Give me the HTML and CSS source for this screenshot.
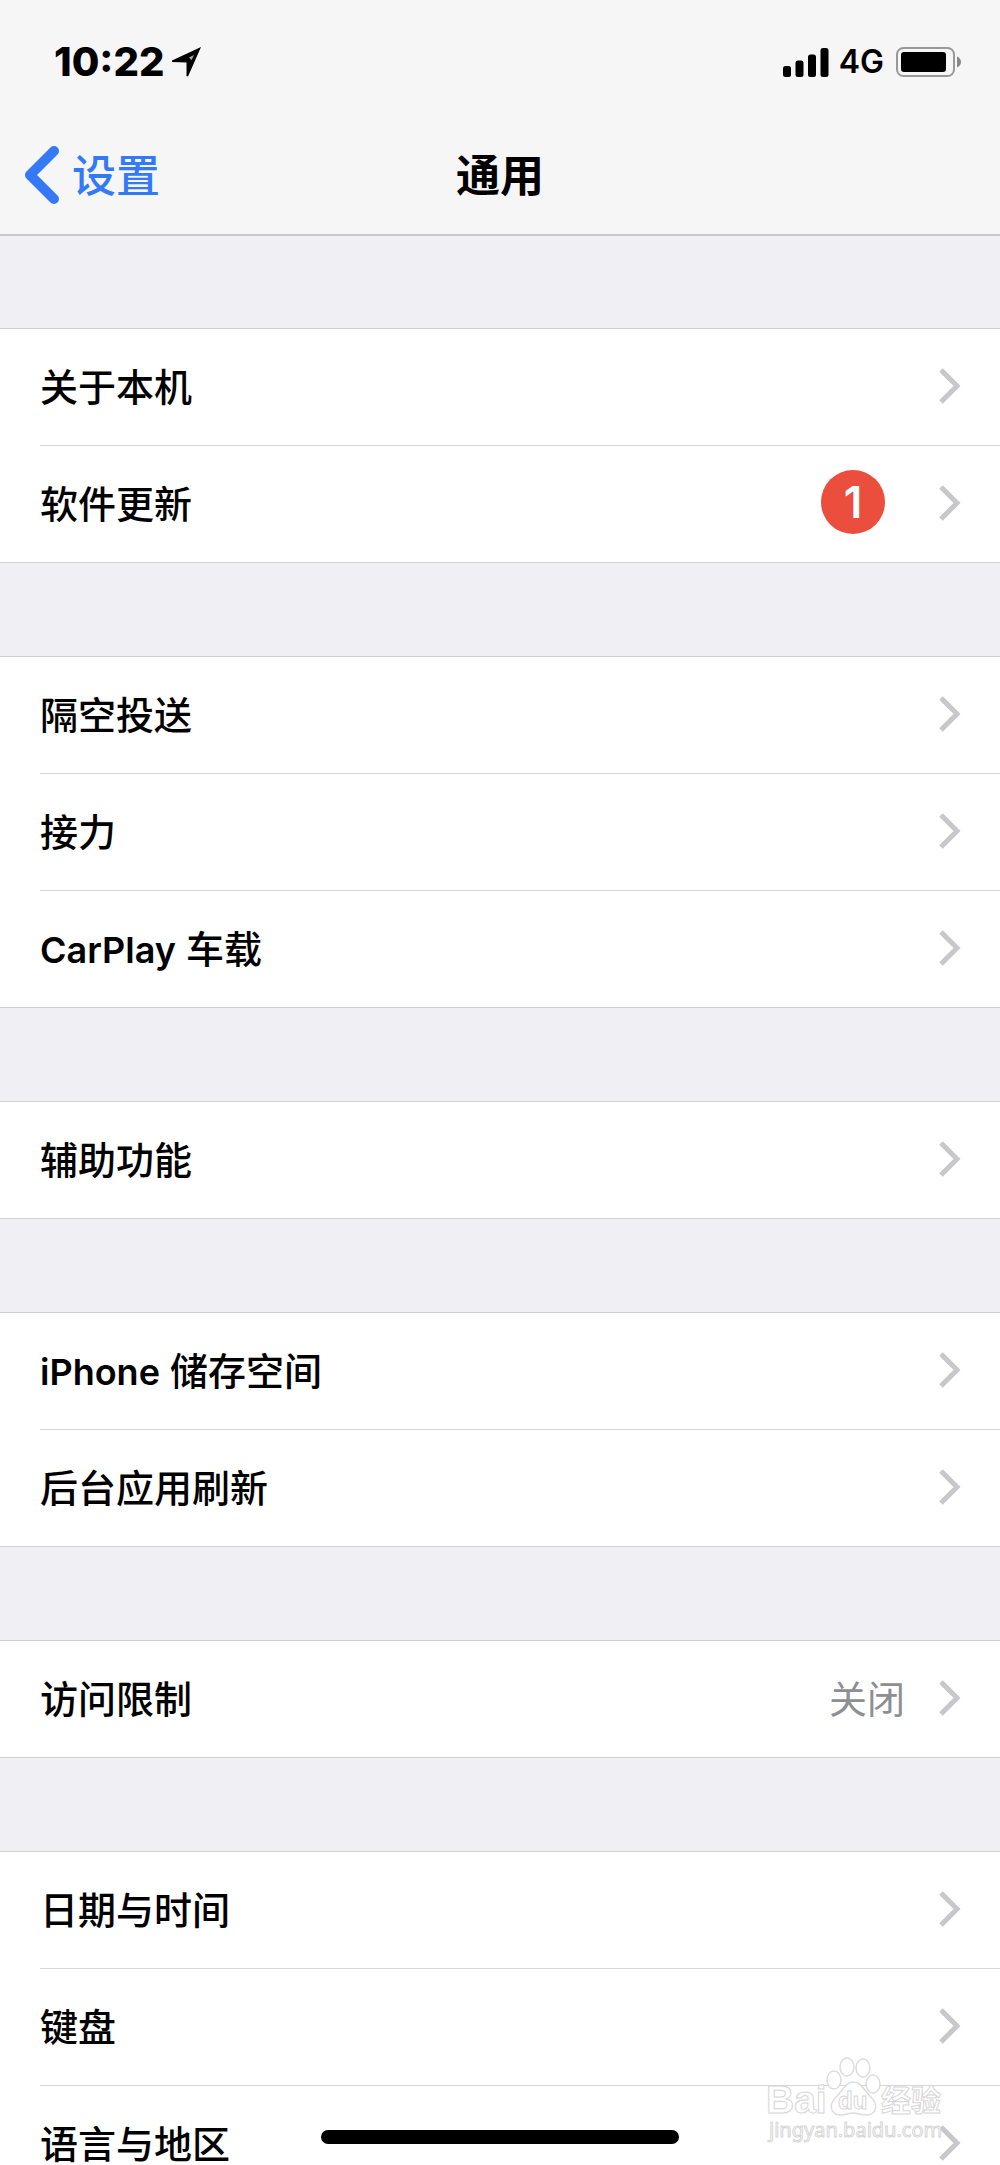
FILE: index.html
```html
<!DOCTYPE html>
<html lang="zh-CN">
<head>
<meta charset="utf-8">
<meta name="viewport" content="width=device-width, initial-scale=1">
<title>通用</title>
<link rel="stylesheet" href="styles.css">
</head>
<body>
<svg class="defs" aria-hidden="true">
  <symbol id="chevron" viewBox="0 0 22 36"><path d="M2 2 L18 18 L2 34" fill="none" stroke="#c7c7cc" stroke-width="5"/></symbol>
</svg>
<div class="screen">
  <header class="header">
    <div class="status">
      <div class="status-side">
        <span class="time">10:22</span>
        <svg class="location" viewBox="0 0 30 30" aria-hidden="true"><path d="M29 0 L16 29.500 L14.500 29 L14.500 15.500 L0 15 L0 13.500 Z"/><path d="M22 8 L19.500 13 L17 10.500 Z" fill="#aaa"/></svg>
      </div>
      <div class="status-side">
        <svg class="signal" viewBox="0 0 46 29" aria-hidden="true"><rect x="0" y="18" width="8" height="11" rx="2.500"/><rect x="12.500" y="12.500" width="8" height="16.500" rx="2.500"/><rect x="25" y="6.500" width="8" height="22.500" rx="2.500"/><rect x="37.500" y="0" width="8" height="29" rx="2.500"/></svg>
        <span class="network">4G</span>
        <svg class="battery" viewBox="0 0 66 30" aria-hidden="true"><rect x="1" y="1" width="57" height="28" rx="6.500" fill="none" stroke="#999" stroke-width="2"/><rect x="5" y="5" width="45" height="20" rx="3"/><path d="M61 9.500 Q65 11.500 65 15 Q65 18.500 61 20.500 Z" fill="#888"/></svg>
      </div>
    </div>
    <nav class="nav">
      <a class="back" href="#"><svg class="back-icon" viewBox="0 0 36 58" aria-hidden="true"><path d="M30 5 L6 29 L30 53" fill="none" stroke="#347af6" stroke-width="10" stroke-linecap="round" stroke-linejoin="round"/></svg>设置</a>
      <h1 class="title">通用</h1>
    </nav>
  </header>
  <main class="groups">
    <ul class="group">
      <li><a class="row" href="#"><span class="label">关于本机</span><svg class="chevron"><use href="#chevron"/></svg></a></li>
      <li><a class="row" href="#"><span class="label">软件更新</span><span class="badge">1</span><svg class="chevron"><use href="#chevron"/></svg></a></li>
    </ul>
    <ul class="group">
      <li><a class="row" href="#"><span class="label">隔空投送</span><svg class="chevron"><use href="#chevron"/></svg></a></li>
      <li><a class="row" href="#"><span class="label">接力</span><svg class="chevron"><use href="#chevron"/></svg></a></li>
      <li><a class="row" href="#"><span class="label"><span class="latin">CarPlay</span> 车载</span><svg class="chevron"><use href="#chevron"/></svg></a></li>
    </ul>
    <ul class="group">
      <li><a class="row" href="#"><span class="label">辅助功能</span><svg class="chevron"><use href="#chevron"/></svg></a></li>
    </ul>
    <ul class="group">
      <li><a class="row" href="#"><span class="label"><span class="latin">iPhone</span> 储存空间</span><svg class="chevron"><use href="#chevron"/></svg></a></li>
      <li><a class="row" href="#"><span class="label">后台应用刷新</span><svg class="chevron"><use href="#chevron"/></svg></a></li>
    </ul>
    <ul class="group">
      <li><a class="row" href="#"><span class="label">访问限制</span><span class="value">关闭</span><svg class="chevron"><use href="#chevron"/></svg></a></li>
    </ul>
    <ul class="group">
      <li><a class="row" href="#"><span class="label">日期与时间</span><svg class="chevron"><use href="#chevron"/></svg></a></li>
      <li><a class="row" href="#"><span class="label">键盘</span><svg class="chevron"><use href="#chevron"/></svg></a></li>
      <li><a class="row" href="#"><span class="label">语言与地区</span><svg class="chevron"><use href="#chevron"/></svg></a></li>
    </ul>
  </main>
  <svg class="watermark" viewBox="0 0 260 135">
    <g fill="#fff" stroke="#dcdcdc" stroke-width="1.500">
      <ellipse cx="94" cy="50" rx="7" ry="9"/>
      <ellipse cx="107" cy="37" rx="7" ry="9"/>
      <ellipse cx="123" cy="38" rx="7" ry="9"/>
      <ellipse cx="133" cy="54" rx="7" ry="9"/>
      <path d="M113 52 C121 52 124 60 130 66 C138 73 138 84 127 85 C121 85 118 83 113 83 C108 83 106 85 100 85 C89 84 89 73 97 66 C103 60 106 52 113 52 Z"/>
    </g>
    <g class="mark-text">
      <text x="26" y="83" font-size="39">Bai</text>
      <text x="98" y="79" font-size="24">du</text>
      <text x="141" y="81" font-size="30">经验</text>
      <text class="mark-url" x="29" y="107" font-size="20">jingyan.baidu.com</text>
    </g>
  </svg>
  <div class="home-bar"></div>
</div>
</body>
</html>
```
FILE: styles.css
```css
* { box-sizing: border-box; }
body {
  margin: 0;
  background: #efeff4;
  color: #000;
  font-family: Inter, "Noto Sans CJK SC", sans-serif;
}
a { color: inherit; text-decoration: none; }
.defs { position: absolute; width: 0; height: 0; }
.screen {
  position: relative;
  height: 100vh;
  overflow: hidden;
}
.header {
  background: #f6f6f6;
  border-bottom: 2px solid #c8c8cc;
}
.status {
  display: flex;
  justify-content: space-between;
  align-items: center;
  height: 124px;
  padding: 0 38px 0 54px;
}
.status-side { display: flex; align-items: center; }
.time { font-size: 40px; font-weight: 800; line-height: 48px; }
.location { width: 30px; height: 30px; margin-left: 8px; }
.signal { width: 46px; height: 29px; }
.network { margin: 0 12px 0 10px; font-size: 32px; font-weight: 600; line-height: 40px; }
.battery { width: 66px; height: 30px; }
.nav {
  display: grid;
  grid-template-columns: 1fr auto 1fr;
  align-items: center;
  height: 110px;
  padding: 0 24px 6px;
}
.back {
  display: flex;
  align-items: center;
  gap: 12px;
  color: #347af6;
  font-size: 44px;
  font-weight: 500;
  line-height: 64px;
}
.back-icon { width: 36px; height: 58px; margin-bottom: 2px; }
.title { margin: 0; font-size: 44px; font-weight: 700; line-height: 64px; }
.groups {
  display: flex;
  flex-direction: column;
  gap: 93px;
  padding-top: 92px;
}
.group {
  margin: 0;
  padding: 0 0 0 40px;
  list-style: none;
  background: #fff;
  border-top: 1px solid #d0d0d4;
  border-bottom: 1px solid #d0d0d4;
}
.group li + li { border-top: 1px solid #d6d6d9; }
.row {
  display: flex;
  align-items: center;
  height: 116px;
  padding: 0 39px 0 0;
  font-size: 38px;
  font-weight: 500;
  line-height: 56px;
}
.label { flex: 1; }
.latin { font-size: 36px; font-weight: 600; }
.chevron { width: 22px; height: 36px; margin-bottom: 2px; }
.value { margin-right: 34px; color: #8e8e93; font-weight: 400; }
.badge {
  width: 64px;
  height: 64px;
  margin: 0 54px 4px 0;
  border-radius: 50%;
  background: #eb4e3d;
  color: #fff;
  font-size: 44px;
  font-weight: 600;
  line-height: 64px;
  text-align: center;
}
.watermark {
  position: absolute;
  right: 0;
  bottom: 0;
  width: 260px;
  height: 135px;
  pointer-events: none;
}
.mark-text {
  fill: #fff;
  stroke: #d6d6d6;
  stroke-width: 1px;
  font-family: "Liberation Sans", "Noto Sans CJK SC", sans-serif;
  font-weight: 700;
}
.mark-url { font-family: "Noto Sans", sans-serif; font-weight: 400; }
.home-bar {
  position: absolute;
  left: 50%;
  bottom: 21px;
  width: 358px;
  height: 14px;
  margin-left: -179px;
  border-radius: 7px;
  background: #000;
}
```
